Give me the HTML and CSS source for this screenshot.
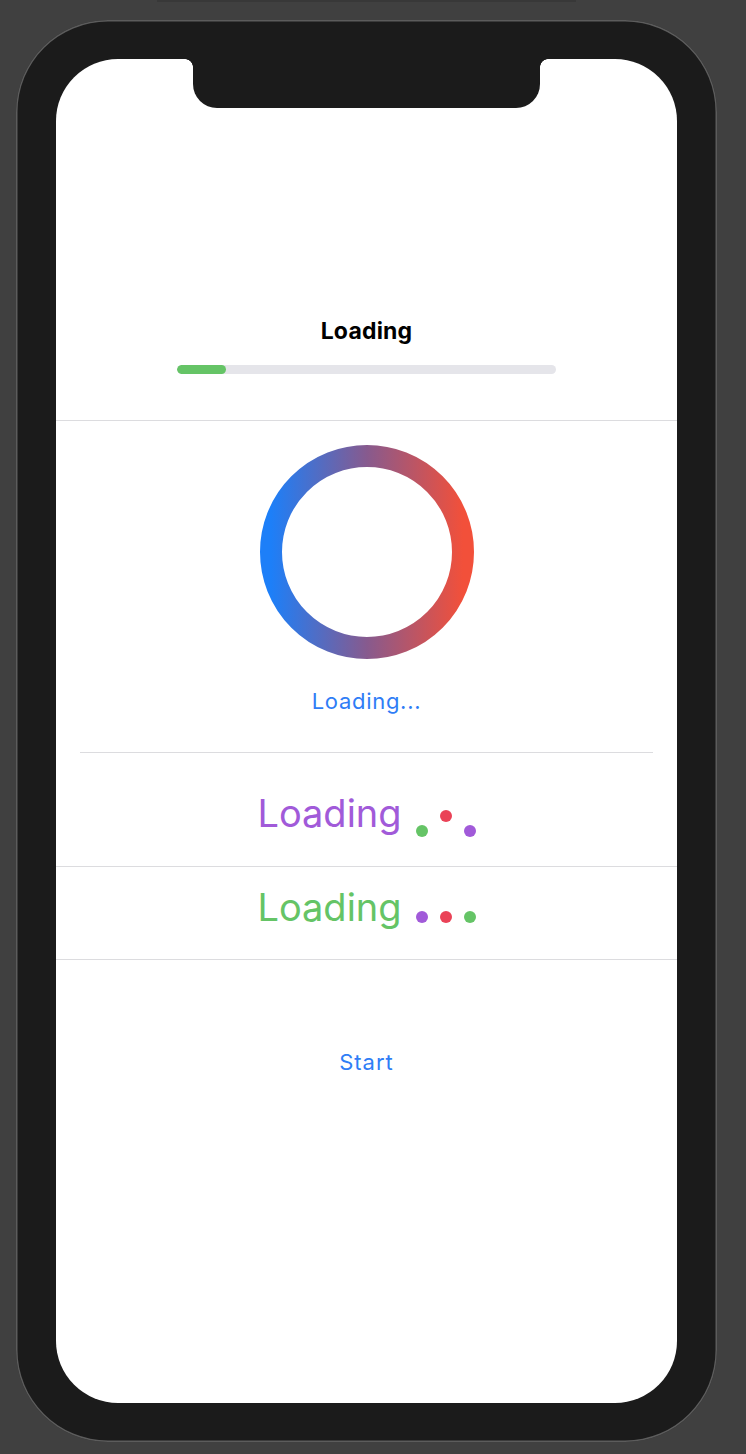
FILE: index.html
```html
<!DOCTYPE html>
<html lang="en">
<head>
<meta charset="utf-8">
<title>Loading</title>
<link rel="stylesheet" href="styles.css">
</head>
<body>
<div class="top-strip"></div>
<div class="phone">
  <div class="screen">
    <div class="notch"></div>
    <section class="sec-progress">
      <h1 class="title">Loading</h1>
      <div class="track"><div class="fill" style="width:13%"></div></div>
    </section>
    <section class="sec-ring">
      <svg class="ring" width="214" height="214" viewBox="0 0 214 214">
        <defs>
          <linearGradient id="rg" x1="0" y1="0" x2="1" y2="0">
            <stop offset="0" stop-color="#1d7ff8"/>
            <stop offset="0.5" stop-color="#875a8e"/>
            <stop offset="1" stop-color="#f2503a"/>
          </linearGradient>
        </defs>
        <circle cx="107" cy="107" r="96" fill="none" stroke="url(#rg)" stroke-width="22"/>
      </svg>
      <p class="ring-label">Loading...</p>
    </section>
    <div class="inset-divider"></div>
    <section class="row row-purple">
      <span class="big purple">Loading</span>
      <span class="dots">
        <span class="dot green down"></span>
        <span class="dot red up"></span>
        <span class="dot purple-bg down"></span>
      </span>
    </section>
    <section class="row row-green">
      <span class="big green-text">Loading</span>
      <span class="dots">
        <span class="dot purple-bg level"></span>
        <span class="dot red level"></span>
        <span class="dot green level"></span>
      </span>
    </section>
    <div class="start-wrap"><button class="start">Start</button></div>
  </div>
</div>
</body>
</html>
```

FILE: styles.css
```css
* { box-sizing: border-box; }
html, body { margin: 0; padding: 0; }
body {
  background: #404040;
  width: 746px;
  height: 1454px;
  overflow: hidden;
  font-family: Inter, "Noto Sans", sans-serif;
}
.top-strip {
  width: 419px;
  height: 2px;
  margin-left: 157px;
  background: #383838;
}
.phone {
  margin-top: 18px;
  margin-left: 16px;
  width: 701px;
  height: 1422px;
  border-radius: 92px;
  background: #1b1b1b;
  box-shadow: inset 0 0 0 1.5px #5c5c5c;
  padding: 39px 39px 39px 40px;
}
.screen {
  position: relative;
  width: 621px;
  height: 1344px;
  background: #fff;
  border-radius: 62px;
  overflow: hidden;
}
.notch {
  position: absolute;
  top: 0;
  left: 137px;
  width: 347px;
  height: 49px;
  background: #1b1b1b;
  border-radius: 0 0 24px 24px;
}
.notch::before, .notch::after {
  content: "";
  position: absolute;
  top: 0;
  width: 8px;
  height: 8px;
}
.notch::before {
  left: -8px;
  background: radial-gradient(circle at 0 100%, transparent 7.5px, #1b1b1b 8px);
}
.notch::after {
  right: -8px;
  background: radial-gradient(circle at 100% 100%, transparent 7.5px, #1b1b1b 8px);
}
.sec-progress {
  height: 362px;
  padding-top: 258px;
  border-bottom: 1px solid #dcdcdf;
  display: flex;
  flex-direction: column;
  align-items: center;
}
.title {
  margin: 0;
  font-size: 23px;
  line-height: 28px;
  font-weight: 700;
  color: #000;
  letter-spacing: 0.2px;
}
.track {
  margin-top: 20px;
  width: 379px;
  height: 9px;
  border-radius: 5px;
  background: #e5e5ea;
  overflow: hidden;
}
.fill {
  height: 100%;
  border-radius: 5px;
  background: #65c466;
}
.sec-ring {
  padding-top: 24px;
  padding-bottom: 37px;
  display: flex;
  flex-direction: column;
  align-items: center;
}
.ring { display: block; }
.ring-label {
  margin: 28px 0 0;
  font-size: 22px;
  line-height: 28px;
  color: #2f7df6;
  letter-spacing: 0.7px;
}
.inset-divider {
  margin: 0 24px;
  height: 1px;
  background: #dcdcdf;
}
.row {
  display: flex;
  justify-content: center;
  align-items: baseline;
  border-bottom: 1px solid #dcdcdf;
}
.row-purple { height: 114px; padding-top: 36px; }
.row-green { height: 93px; padding-top: 16px; }
.big {
  font-size: 38px;
  line-height: 48px;
  font-weight: 400;
}
.purple { color: #a15ad9; }
.green-text { color: #65c466; }
.dots {
  display: inline-flex;
  align-items: baseline;
  gap: 12px;
  margin-left: 14px;
}
.dot {
  display: inline-block;
  width: 12px;
  height: 12px;
  border-radius: 50%;
}
.green { background: #65c466; }
.red { background: #ea4257; }
.purple-bg { background: #a15ad9; }
.down { transform: translateY(10px); }
.up { transform: translateY(-5px); }
.level { transform: translateY(2px); }
.start-wrap {
  display: flex;
  justify-content: center;
  padding-top: 88px;
}
.start {
  border: 0;
  background: none;
  padding: 0;
  font-family: inherit;
  font-size: 22px;
  line-height: 28px;
  color: #2f7df6;
  letter-spacing: 1px;
}
```
